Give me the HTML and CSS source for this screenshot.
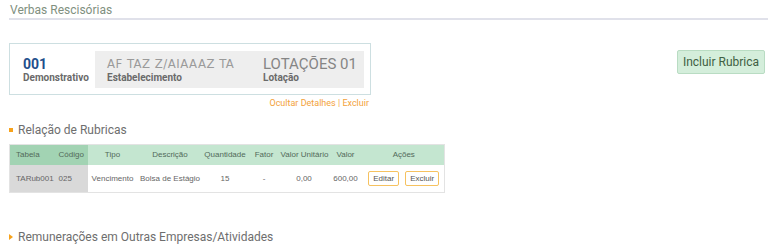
FILE: index.html
```html
<!DOCTYPE html>
<html>

	<head>
		<meta http-equiv="Content-Type" content="text/html; charset=utf-8" />
		<title>Verbas Rescisórias</title>
		<link rel="stylesheet" href="styles.css">
	</head>

	<body>
		<div class="titulo">Verbas Rescisórias</div>

		<div class="topo">
			<div class="detalhe">
				<div class="resumo">
					<div class="bloco demo">
						<strong>001</strong>
						<span>Demonstrativo</span>
					</div>
					<div class="cinza">
						<div class="bloco estab">
							<strong class="oculto">AF TAZ Z/AIAAAZ TA</strong>
							<span>Estabelecimento</span>
						</div>
						<div class="bloco lot">
							<strong>LOTAÇÕES 01</strong>
							<span>Lotação</span>
						</div>
					</div>
				</div>
				<div class="links"><a href="#">Ocultar Detalhes</a> | <a href="#">Excluir</a></div>
			</div>
			<button class="incluir">Incluir Rubrica</button>
		</div>

		<h3 class="secao">Relação de Rubricas</h3>
		<table class="rubricas">
			<colgroup>
				<col style="width:43px">
				<col style="width:35px">
				<col style="width:50px">
				<col style="width:65px">
				<col style="width:45px">
				<col style="width:33px">
				<col style="width:47px">
				<col style="width:36px">
				<col>
			</colgroup>
			<thead>
				<tr>
					<th class="esq esc">Tabela</th>
					<th class="esq esc">Código</th>
					<th>Tipo</th>
					<th>Descrição</th>
					<th>Quantidade</th>
					<th>Fator</th>
					<th>Valor Unitário</th>
					<th>Valor</th>
					<th>Ações</th>
				</tr>
			</thead>
			<tbody>
				<tr>
					<td class="esq cz">TARub001</td>
					<td class="esq cz">025</td>
					<td>Vencimento</td>
					<td>Bolsa de Estágio</td>
					<td>15</td>
					<td>-</td>
					<td>0,00</td>
					<td>600,00</td>
					<td class="acoes"><button>Editar</button><button>Excluir</button></td>
				</tr>
			</tbody>
		</table>

		<h3 class="secao fechada">Remunerações em Outras Empresas/Atividades</h3>
	</body>

</html>
```

FILE: styles.css
```css
* {
	padding: 0;
	margin: 0;
	border: 0;
	box-sizing: border-box;
}

body {
	font-family: Roboto, "Liberation Sans", sans-serif;
	background: #fff;
	color: #666;
	overflow: hidden;
	height: 246px;
}

.titulo {
	margin-left: 9px;
	padding: 3px 0 0 1px;
	height: 20px;
	font-size: 12px;
	line-height: 14px;
	color: #7f9080;
	border-bottom: 2px solid #e0e1ea;
}

.topo {
	display: flex;
	justify-content: space-between;
	align-items: flex-start;
	padding: 23px 3px 0 9px;
}

.detalhe {
	width: 362px;
}

.resumo {
	display: flex;
	border: 1px solid #cddfe1;
	padding: 7px 6px 6px 0;
	height: 52px;
}

.bloco strong {
	display: block;
	font-weight: normal;
}

.bloco span {
	display: block;
	font-size: 10px;
	line-height: 11px;
	font-weight: bold;
	color: #6a6a6a;
}

.demo {
	width: 85px;
	padding: 6px 0 0 13px;
}

.demo strong {
	font-size: 14px;
	line-height: 15px;
	font-weight: bold;
	color: #1f4f8c;
}

.cinza {
	flex: 1;
	display: flex;
	background: #eeeeee;
	padding: 5px 0 0 12px;
}

.estab {
	width: 156px;
}

.oculto {
	font-size: 13px;
	line-height: 15px;
	letter-spacing: 0.5px;
	color: #9a9a9a;
	font-family: "DejaVu Sans Condensed", sans-serif;
	white-space: nowrap;
	margin-bottom: 1px;
}

.lot strong {
	font-size: 15px;
	line-height: 16px;
	color: #858585;
}

.links {
	text-align: right;
	padding-right: 2px;
	margin-top: 3px;
	font-size: 9px;
	line-height: 11px;
	color: #f3a23a;
}

.links a {
	color: #f3a23a;
	text-decoration: none;
}

.incluir {
	margin-top: 7px;
	width: 88px;
	height: 24px;
	background: #d4eedb;
	border: 1px solid #b9dcc3;
	border-radius: 2px;
	font-family: Roboto, "Liberation Sans", sans-serif;
	font-size: 12px;
	color: #3f5f43;
}

.secao {
	display: flex;
	align-items: center;
	margin: 14px 0 0 9px;
	font-size: 12px;
	line-height: 14px;
	font-weight: normal;
	color: #6e6e6e;
}

.secao:before {
	content: "";
	width: 4px;
	height: 4px;
	background: #f7a21b;
	margin-right: 5px;
}

.secao.fechada {
	margin-top: 37px;
}

.secao.fechada:before {
	width: 0;
	height: 0;
	background: none;
	border-left: 4px solid #f7a21b;
	border-top: 3px solid transparent;
	border-bottom: 3px solid transparent;
}

.rubricas {
	margin: 7px 0 0 9px;
	width: 436px;
	table-layout: fixed;
	border-collapse: collapse;
	border: 1px solid #e3e3e3;
	font-family: "Liberation Sans", sans-serif;
	font-size: 8px;
	color: #666;
}

.rubricas th {
	height: 20px;
	background: #c4e6d0;
	font-weight: normal;
	color: #526a5a;
	text-align: center;
	white-space: nowrap;
}

.rubricas th.esc {
	background: #a2d3b3;
}

.rubricas td {
	height: 28px;
	text-align: center;
	white-space: nowrap;
	background: #fff;
}

.rubricas td.cz {
	background: #d9d9d9;
}

.rubricas .esq {
	text-align: left;
	padding-left: 6px;
}

.acoes button {
	height: 15px;
	padding: 0 4px;
	margin: 0 3px;
	background: #fff;
	border: 1px solid #f6c260;
	border-radius: 2px;
	font-family: "Liberation Sans", sans-serif;
	font-size: 8px;
	color: #555;
}
```
